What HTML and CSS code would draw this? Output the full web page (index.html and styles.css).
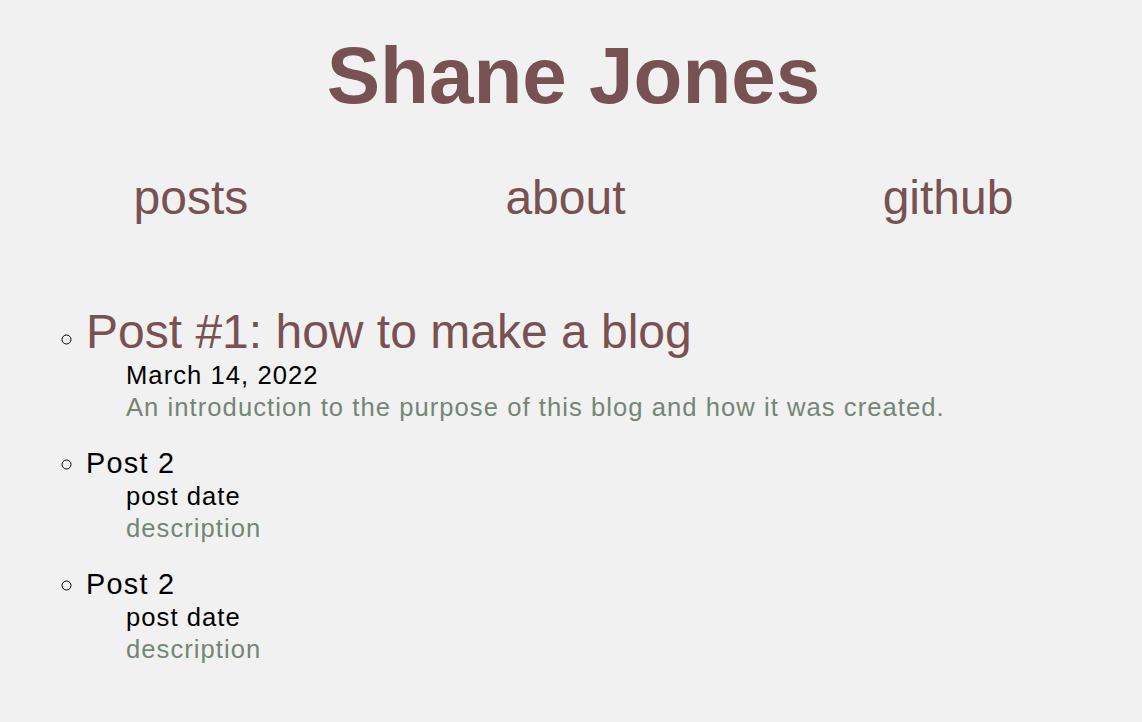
FILE: index.html
```html
<!DOCTYPE html>
<html lang="en">
<head>
<meta charset="utf-8">
<title>Shane Jones</title>
<link rel="stylesheet" href="styles.css">
</head>
<body>
<header class="site-header">
  <h1 class="site-title">Shane Jones</h1>
  <nav class="site-nav">
    <a class="nav-link" href="#">posts</a>
    <a class="nav-link" href="#">about</a>
    <a class="nav-link" href="#">github</a>
  </nav>
</header>
<main class="content">
  <ul class="post-list">
    <li class="post">
      <a class="post-title post-title--featured" href="#">Post #1: how to make a blog</a>
      <div class="post-meta">
        <div class="post-date">March 14, 2022</div>
        <div class="post-desc">An introduction to the purpose of this blog and how it was created.</div>
      </div>
    </li>
    <li class="post">
      <span class="post-title">Post 2</span>
      <div class="post-meta">
        <div class="post-date">post date</div>
        <div class="post-desc">description</div>
      </div>
    </li>
    <li class="post">
      <span class="post-title">Post 2</span>
      <div class="post-meta">
        <div class="post-date">post date</div>
        <div class="post-desc">description</div>
      </div>
    </li>
  </ul>
</main>
</body>
</html>
```

FILE: styles.css
```css
html, body {
  margin: 0;
  padding: 0;
}

body {
  background: #f1f1f1;
  color: #000;
  font-family: "Liberation Sans", Arial, Helvetica, sans-serif;
}

.site-header {
  padding: 30px 0 0 5px;
}

.site-title {
  margin: 0;
  font-size: 80px;
  font-weight: bold;
  line-height: normal;
  text-align: center;
  color: #785253;
}

.site-nav {
  display: flex;
  justify-content: space-around;
  margin-top: 48px;
}

.nav-link {
  font-size: 48px;
  line-height: normal;
  color: #785253;
  text-decoration: none;
}

.content {
  padding-top: 79px;
}

.post-list {
  margin: 0;
  padding: 0 0 0 86px;
  list-style-type: circle;
}

.post {
  font-size: 28.8px;
  line-height: 34px;
  margin-bottom: 23px;
}

.post-title {
  letter-spacing: 1.3px;
  color: #000;
  text-decoration: none;
}

.post-title--featured {
  font-size: 48px;
  line-height: 55px;
  letter-spacing: 0;
  color: #785253;
}

.post-meta {
  padding-left: 40px;
  font-size: 25.6px;
  line-height: 32px;
  letter-spacing: 1.05px;
}

.post-date {
  color: #000;
}

.post-desc {
  color: #738676;
}
```
